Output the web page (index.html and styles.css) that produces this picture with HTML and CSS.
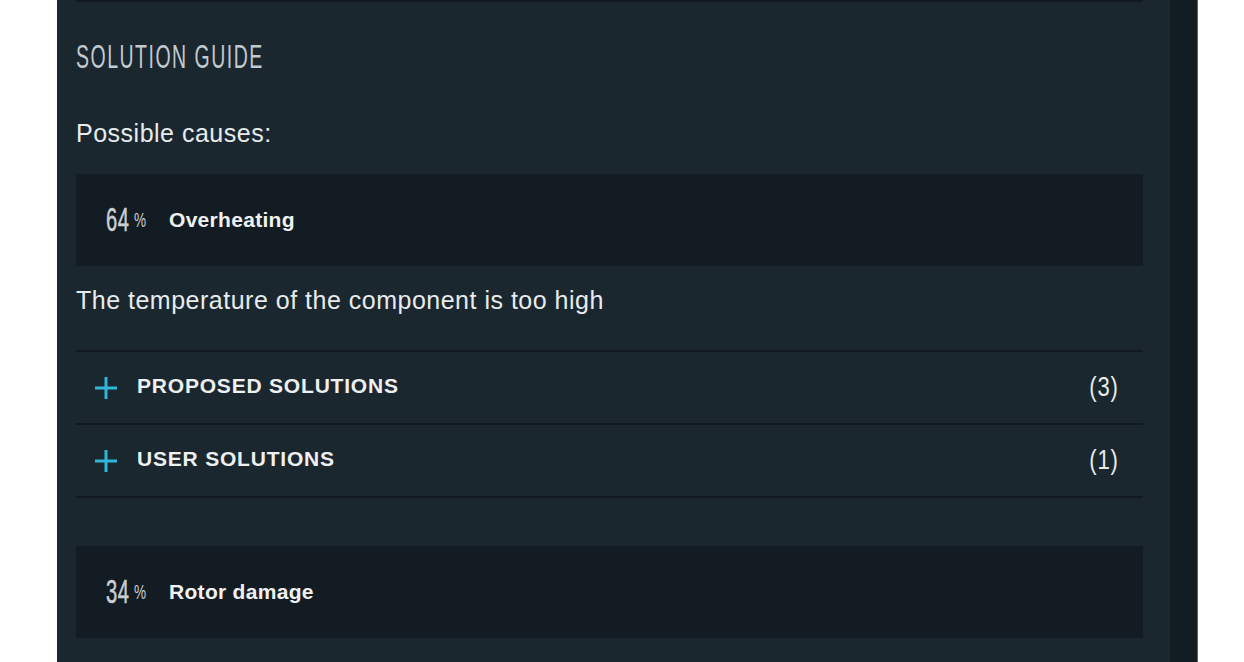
FILE: index.html
```html
<!DOCTYPE html>
<html>
<head>
<meta charset="utf-8">
<link rel="stylesheet" href="styles.css">
</head>
<body>
<div class="panel">
  <div class="main">
    <div class="topline"></div>
    <h2 class="heading"><span class="stretch">SOLUTION GUIDE</span></h2>
    <p class="intro">Possible causes:</p>

    <div class="cause">
      <span class="pct"><span class="num">64</span><span class="sym">%</span></span>
      <span class="cause-name">Overheating</span>
    </div>
    <p class="desc">The temperature of the component is too high</p>
    <div class="acc">
      <div class="acc-row">
        <svg class="plus" width="24" height="24" viewBox="0 0 24 24"><path d="M12 1V23M1 12H23" stroke="#2fb6d8" stroke-width="3" fill="none"/></svg>
        <span class="acc-title">PROPOSED SOLUTIONS</span>
        <span class="count">(3)</span>
      </div>
      <div class="acc-row">
        <svg class="plus" width="24" height="24" viewBox="0 0 24 24"><path d="M12 1V23M1 12H23" stroke="#2fb6d8" stroke-width="3" fill="none"/></svg>
        <span class="acc-title">USER SOLUTIONS</span>
        <span class="count">(1)</span>
      </div>
    </div>

    <div class="cause cause-second">
      <span class="pct"><span class="num">34</span><span class="sym">%</span></span>
      <span class="cause-name">Rotor damage</span>
    </div>
  </div>
  <div class="strip"></div>
</div>
</body>
</html>
```
FILE: styles.css
```css
html, body {
  margin: 0;
  padding: 0;
  background: #ffffff;
  height: 100%;
  overflow: hidden;
}
.panel {
  margin-left: 57px;
  width: 1141px;
  height: 662px;
  display: flex;
  background: #1a272f;
}
.main {
  flex: 1;
  padding: 0 27px 0 19px;
  font-family: "Liberation Sans", Arial, sans-serif;
  color: #e8ebed;
}
.strip {
  width: 27px;
  background: #131c22;
  border-right: 1px solid #59626a;
}
.topline {
  height: 2px;
  background: #121a20;
}
.heading {
  margin: 0;
  padding-top: 37px;
  height: 41px;
  font-weight: normal;
  font-size: 26px;
  line-height: 34px;
  letter-spacing: 2px;
  color: #c3cacf;
}
.stretch {
  display: inline-block;
  transform: scale(0.75, 1.29);
  transform-origin: 0 50%;
}
.intro {
  margin: 0;
  padding-top: 38px;
  height: 56px;
  font-size: 25px;
  line-height: 30px;
  letter-spacing: 0.5px;
}
.cause {
  height: 92px;
  background: #131c22;
  display: flex;
  align-items: center;
  padding-left: 30px;
}
.pct {
  flex: none;
  width: 63px;
  display: flex;
  align-items: center;
  color: #c8cfd3;
}
.num {
  display: inline-block;
  width: 27px;
  font-size: 24px;
  line-height: 30px;
  letter-spacing: 0.5px;
  -webkit-text-stroke: 0.4px #c8cfd3;
  transform: scale(0.84, 1.36);
  transform-origin: 0 50%;
}
.sym {
  display: inline-block;
  margin-left: 1px;
  margin-top: 1px;
  font-size: 16px;
  line-height: 20px;
  transform: scale(0.85, 1.25);
  transform-origin: 0 50%;
}
.cause-name {
  font-weight: bold;
  font-size: 21px;
  letter-spacing: 0.3px;
  color: #f0f2f3;
}
.desc {
  margin: 0;
  height: 84px;
  font-size: 25px;
  line-height: 68px;
  letter-spacing: 0.5px;
}
.acc {
  border-top: 2px solid #121a20;
}
.acc-row {
  height: 71px;
  border-bottom: 2px solid #121a20;
  display: flex;
  align-items: center;
  padding: 0 24px 0 18px;
}
.plus {
  flex: none;
  margin-right: 19px;
}
.acc-title {
  flex: 1;
  margin-top: -3px;
  font-weight: bold;
  font-size: 21px;
  letter-spacing: 0.8px;
  color: #eef0f2;
}
.count {
  display: inline-block;
  font-size: 26px;
  letter-spacing: 1px;
  color: #e8ebed;
  transform: scale(0.85, 1.05);
  transform-origin: 100% 50%;
}
.cause-second {
  margin-top: 48px;
}
```
